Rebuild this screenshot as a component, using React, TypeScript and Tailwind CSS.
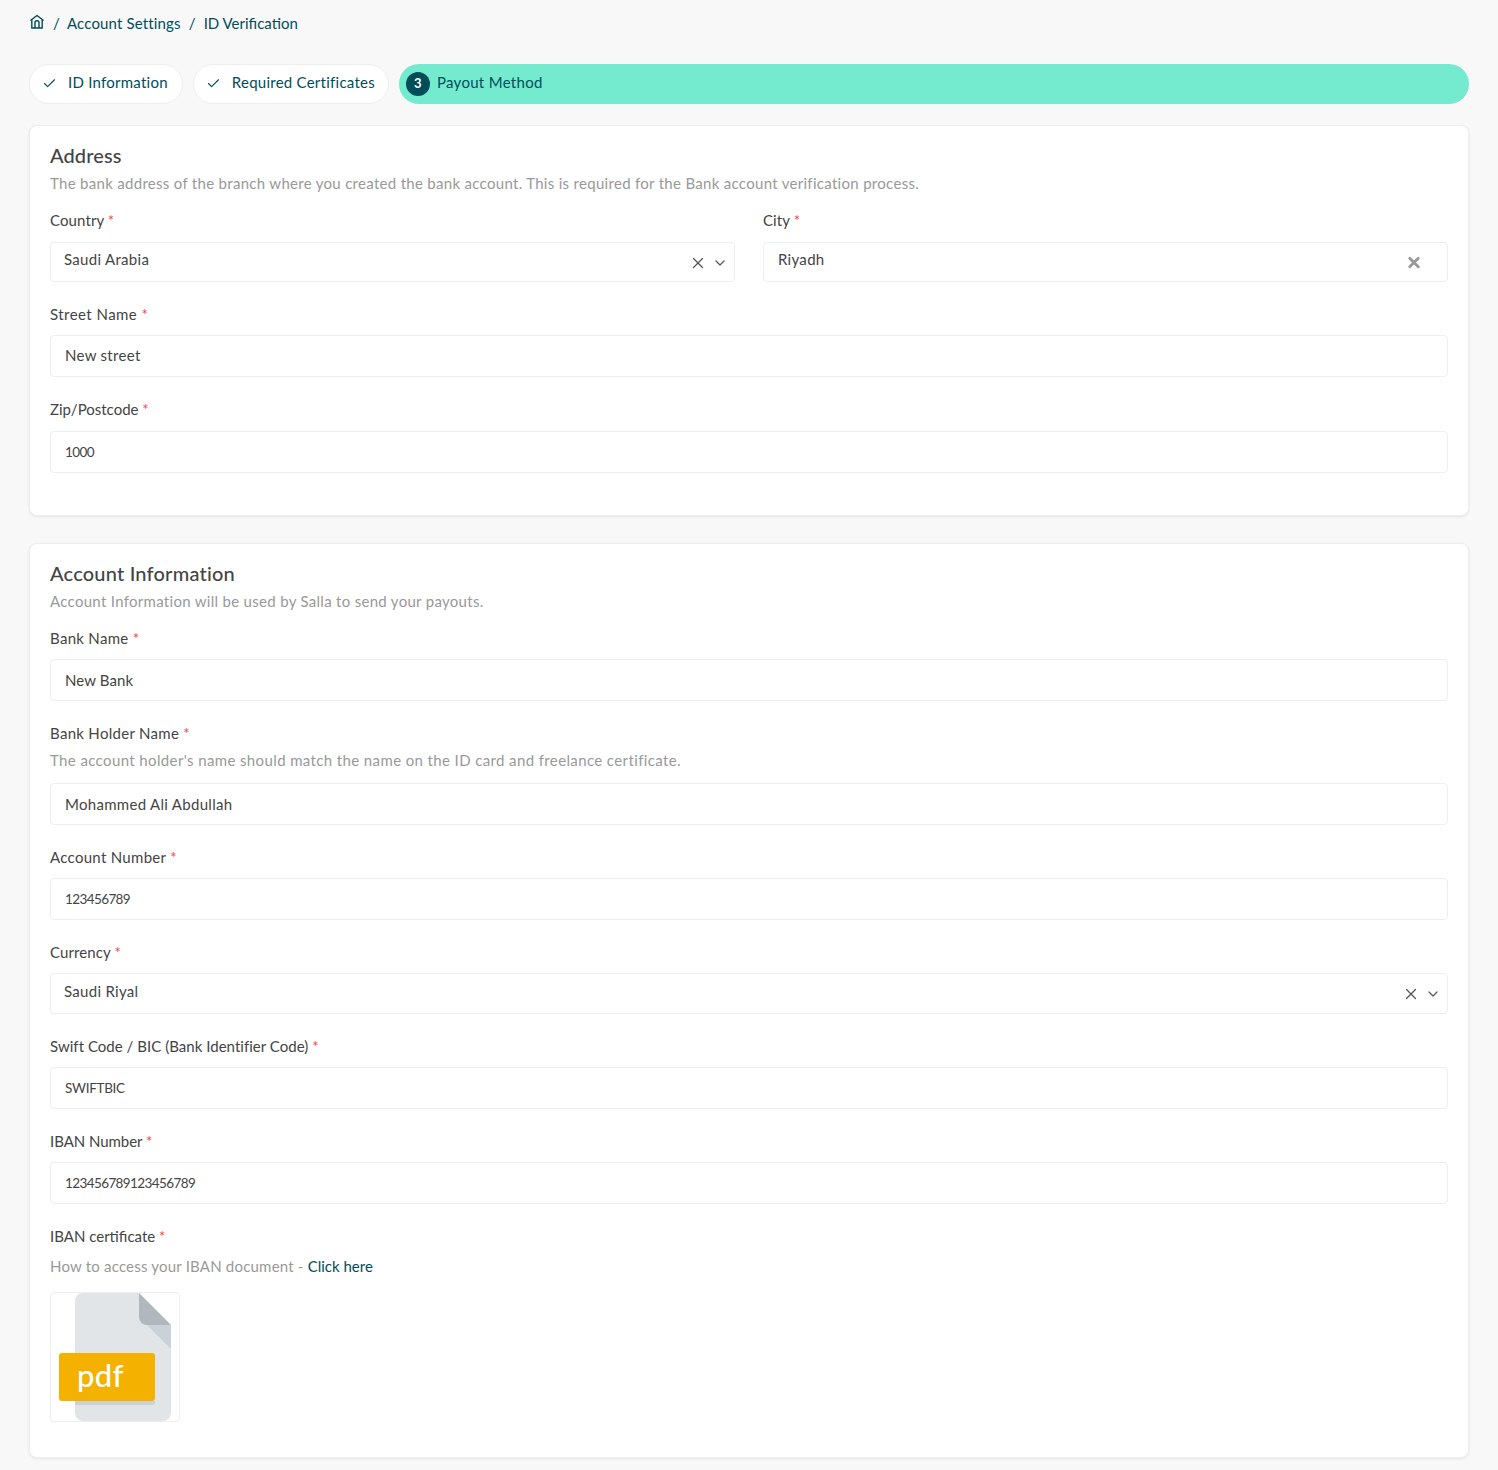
import { Check, ChevronDown, X } from "lucide-react";

const FONT = "font-['Lato','Liberation_Sans',sans-serif] tracking-[0.3px]";

const Label = ({ text, className = "" }: { text: string; className?: string }) => (
  <div className={`h-5 text-[15px] leading-5 text-[#444] ${className}`}>
    {text} <span className="text-[#ef4444]">*</span>
  </div>
);

// digits and capitals are much narrower in the reference font
const TextInput = ({ value, textClass = "text-[15px] pt-[1px] pb-[2px]" }: { value: string; textClass?: string }) => (
  <div className={`flex h-[42px] items-center rounded border border-[#eceef0] bg-white px-[14px] text-[#444] ${textClass}`}>
    {value}
  </div>
);

const DIGITS = "text-[13.5px] tracking-[-0.6px]";

const SelectBox = ({ value, tall = false }: { value: string; tall?: boolean }) => (
  <div className={`flex ${tall ? "h-[41px]" : "h-10"} items-start rounded border border-[#eceef0] bg-white pl-[13px] pr-[6px] text-[15px] text-[#444]`}>
    <span className={`flex-1 leading-5 ${tall ? "pt-[7px]" : "pt-[6px]"}`}>{value}</span>
    <div className="flex items-center gap-[5px] self-center pt-[1px] text-[#555]">
      <X size={18} strokeWidth={1.7} />
      <ChevronDown size={16} strokeWidth={1.8} />
    </div>
  </div>
);

const Step = ({ label, className = "" }: { label: string; className?: string }) => (
  <div className={`flex h-10 items-center rounded-full border border-[#eeeeee] bg-white pl-[12px] text-[15px] tracking-[0.25px] text-[#004d5a] ${className}`}>
    <Check size={15} strokeWidth={1.8} className="mb-[1px]" />
    <span className="ml-[11px] pb-[3px]">{label}</span>
  </div>
);

const Card = ({ children, className = "" }: { children: React.ReactNode; className?: string }) => (
  <section className={`rounded-lg border border-[#eeeeee] bg-white px-[20px] shadow-[0_1px_3px_rgba(0,0,0,0.08)] ${className}`}>
    {children}
  </section>
);

const PdfIcon = () => (
  <svg width="128" height="128" viewBox="0 0 128 128">
    <path d="M32 0h56l32 32v88a8 8 0 0 1-8 8H32a8 8 0 0 1-8-8V8a8 8 0 0 1 8-8z" fill="#e2e5e7" />
    <path d="M88 0l32 32H96a8 8 0 0 1-8-8z" fill="#b0b7bd" />
    <path d="M96 32l24 24V32z" fill="#cad1d8" />
    <path d="M24 108h80v1a3 3 0 0 1-3 3H24z" fill="#cad1d8" />
    <rect x="8" y="60" width="96" height="48" rx="3" fill="#f4b100" />
    <text x="26" y="94" fontSize="31" fontWeight="500" fill="#fff" fontFamily="Lato, sans-serif">pdf</text>
  </svg>
);

export default function App() {
  return (
    <div className={`${FONT} min-h-[1470px] bg-[#f8f8f8] px-[29px] pb-[13px] pt-[14px]`}>
      <nav className="flex h-5 items-center text-[15px] tracking-[0.15px] text-[#004d5a]">
        <svg width="16" height="16" viewBox="0 0 16 16" fill="none" stroke="#004d5a" strokeWidth="1.4" className="mb-1">
          <path d="M1.5 6.5 8 1.5l6.5 5" strokeLinejoin="round" />
          <path d="M2.8 5.8V14h10.4V5.8" />
          <path d="M6 14V8.8a2 2 0 0 1 4 0V14" />
        </svg>
        <span className="ml-[8px] mr-[7px] pb-[2px]">/</span>
        <span className="pb-[2px]">Account Settings</span>
        <span className="mx-[8px] pb-[2px]">/</span>
        <span className="pb-[2px] tracking-normal">ID Verification</span>
      </nav>

      <div className="mt-[30px] flex gap-[10px]">
        <Step label="ID Information" className="pr-[14px]" />
        <Step label="Required Certificates" className="pr-[13px]" />
        <div className="flex h-10 flex-1 items-center rounded-full bg-[#74ebcf] pl-[7px] text-[15px] text-[#004d5a]">
          <span className="flex h-6 w-6 items-center justify-center rounded-full bg-[#004d5a] text-[13px] font-bold text-white">3</span>
          <span className="ml-[7px] pb-[3px]">Payout Method</span>
        </div>
      </div>

      <Card className="mt-[21px] h-[391px] pt-[17px]">
        <h2 className="h-6 text-[20px] font-medium leading-6 tracking-[0.1px] text-[#444]">Address</h2>
        <p className="mt-[6px] h-5 text-[15px] leading-5 text-[#999]">
          The bank address of the branch where you created the bank account. This is required for the Bank account verification process.
        </p>
        <div className="mt-[17px] grid grid-cols-2 gap-[28px]">
          <div>
            <Label text="Country" className="tracking-[0.1px]" />
            <div className="mt-[12px]"><SelectBox value="Saudi Arabia" /></div>
          </div>
          <div>
            <Label text="City" className="tracking-[0.1px]" />
            <div className="mt-[12px] flex h-10 items-start rounded border border-[#eceef0] bg-white pl-[14px] pr-[24px] text-[15px] text-[#444]">
              <span className="flex-1 pt-[6px] leading-5">Riyadh</span>
              <X size={18} strokeWidth={4} className="self-center pt-[1px] text-[#999]" />
            </div>
          </div>
        </div>
        <Label text="Street Name" className="mt-[22px] tracking-[0.45px]" />
        <div className="mt-[11px]"><TextInput value="New street" textClass="text-[15px] pb-[2px]" /></div>
        <Label text="Zip/Postcode" className="mt-[22px] tracking-normal" />
        <div className="mt-[12px]"><TextInput value="1000" textClass={DIGITS} /></div>
      </Card>

      <Card className="mt-[27px] h-[915px] pt-[17px]">
        <h2 className="h-6 text-[20px] font-medium leading-6 tracking-[0.2px] text-[#444]">Account Information</h2>
        <p className="mt-[6px] h-5 text-[15px] leading-5 text-[#999]">
          Account Information will be used by Salla to send your payouts.
        </p>
        <Label text="Bank Name" className="mt-[17px]" />
        <div className="mt-[11px]"><TextInput value="New Bank" textClass="text-[15px] tracking-[0.1px]" /></div>
        <Label text="Bank Holder Name" className="mt-[22px]" />
        <p className="mt-[7px] h-5 text-[15px] leading-5 tracking-[0.38px] text-[#999]">
          The account holder's name should match the name on the ID card and freelance certificate.
        </p>
        <div className="mt-[13px]"><TextInput value="Mohammed Ali Abdullah" textClass="text-[15px]" /></div>
        <Label text="Account Number" className="mt-[22px]" />
        <div className="mt-[11px]"><TextInput value="123456789" textClass={DIGITS} /></div>
        <Label text="Currency" className="mt-[22px] tracking-[0.1px]" />
        <div className="mt-[11px]"><SelectBox value="Saudi Riyal" tall /></div>
        <Label text="Swift Code / BIC (Bank Identifier Code)" className="mt-[22px] tracking-[0.03px]" />
        <div className="mt-[11px]"><TextInput value="SWIFTBIC" textClass="text-[13.5px] tracking-[-0.3px]" /></div>
        <Label text="IBAN Number" className="mt-[22px] tracking-[-0.05px]" />
        <div className="mt-[11px]"><TextInput value="123456789123456789" textClass={DIGITS} /></div>
        <Label text="IBAN certificate" className="mt-[22px] tracking-normal" />
        <p className="mt-[10px] h-5 text-[15px] leading-5 tracking-[0.2px] text-[#999]">
          How to access your IBAN document - <span className="tracking-normal text-[#004d5a]">Click here</span>
        </p>
        <div className="mt-[16px] h-[130px] w-[130px] rounded border border-[#eceef0] bg-white">
          <PdfIcon />
        </div>
      </Card>
    </div>
  );
}
